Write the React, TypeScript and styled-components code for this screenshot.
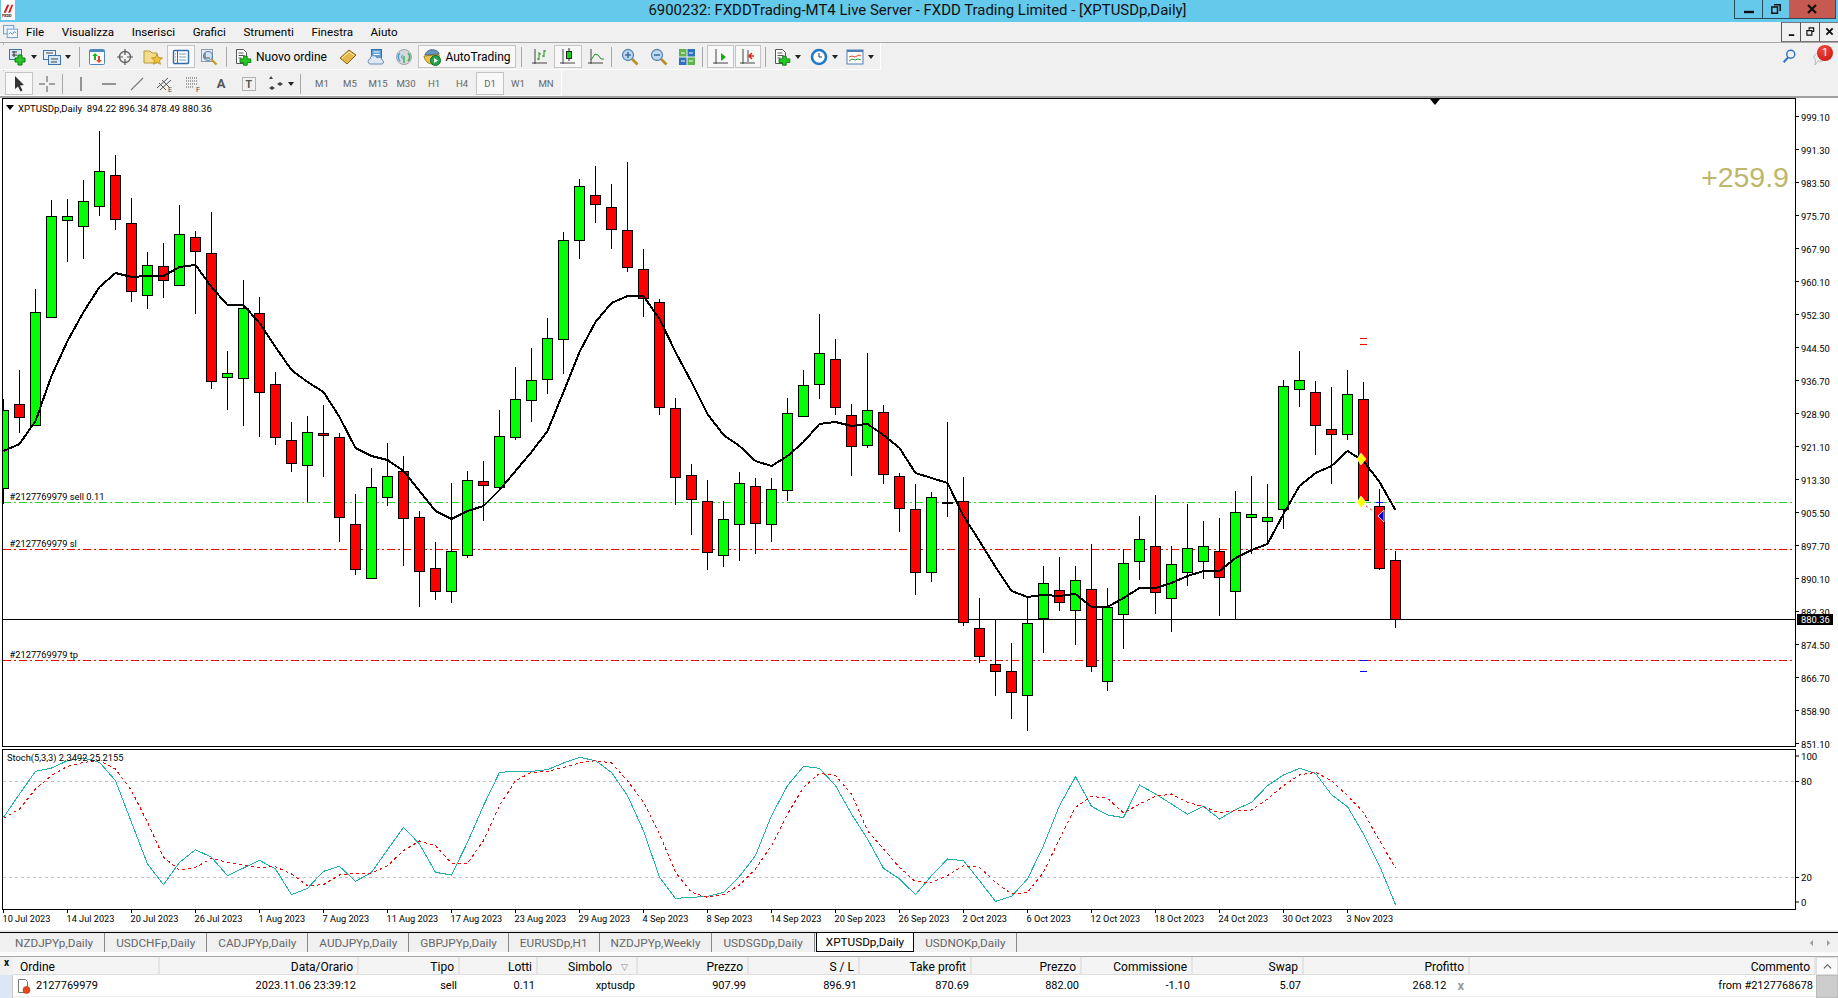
import React from "react";
import styled, { createGlobalStyle } from "styled-components";

// [high, body top, body bottom, low, up] in page pixels, one per bar, 16px apart
const BARS: [number, number, number, number, number][] = [
  [400, 411, 489, 505, 1], [371, 405, 418, 434, 0], [290, 313, 426, 426, 1], [201, 217, 318, 318, 1],
  [200, 217, 221, 263, 1], [181, 202, 227, 260, 1], [132, 172, 207, 217, 1], [156, 176, 220, 231, 0],
  [199, 224, 292, 303, 0], [253, 266, 296, 310, 1], [244, 267, 281, 299, 0], [206, 235, 286, 286, 1],
  [232, 238, 252, 315, 0], [213, 254, 382, 390, 0], [352, 374, 378, 411, 1], [281, 309, 379, 427, 1],
  [298, 314, 393, 438, 0], [373, 385, 438, 446, 0], [423, 441, 464, 473, 0], [417, 433, 466, 503, 1],
  [406, 434, 436, 478, 0], [434, 438, 518, 543, 0], [495, 525, 570, 576, 0], [469, 488, 579, 579, 1],
  [444, 477, 498, 507, 1], [457, 472, 519, 567, 0], [512, 518, 572, 608, 0], [543, 569, 592, 601, 0],
  [484, 552, 592, 604, 1], [472, 481, 556, 559, 1], [462, 482, 486, 522, 0], [411, 437, 488, 492, 1],
  [368, 400, 438, 441, 1], [349, 381, 401, 423, 1], [319, 339, 380, 395, 1], [233, 241, 340, 375, 1],
  [180, 187, 241, 260, 1], [167, 196, 205, 224, 0], [185, 208, 230, 250, 0], [163, 231, 268, 273, 0],
  [250, 270, 299, 318, 0], [300, 303, 408, 416, 0], [399, 409, 478, 506, 0], [465, 476, 500, 536, 0],
  [481, 502, 553, 571, 0], [502, 520, 556, 568, 1], [473, 484, 525, 562, 1], [479, 487, 524, 555, 0],
  [479, 490, 525, 543, 1], [399, 414, 491, 502, 1], [371, 386, 417, 417, 1], [315, 354, 385, 400, 1],
  [340, 360, 408, 416, 0], [405, 416, 447, 477, 0], [354, 411, 446, 449, 1], [406, 413, 475, 485, 0],
  [474, 477, 509, 533, 0], [485, 510, 573, 596, 0], [493, 498, 573, 583, 1], [423, 504, 504, 518, 0],
  [478, 502, 623, 627, 0], [599, 629, 657, 664, 0], [620, 665, 672, 697, 0], [644, 672, 693, 720, 0],
  [598, 624, 696, 732, 1], [567, 584, 619, 654, 1], [558, 591, 603, 612, 0], [567, 581, 611, 646, 1],
  [545, 590, 667, 673, 0], [589, 608, 682, 692, 1], [550, 564, 615, 650, 1], [517, 540, 562, 581, 1],
  [496, 547, 593, 615, 0], [547, 565, 599, 633, 1], [505, 549, 573, 587, 1], [522, 547, 562, 580, 1],
  [519, 552, 578, 617, 0], [492, 513, 592, 621, 1], [477, 515, 518, 555, 1], [485, 518, 522, 545, 1],
  [381, 387, 510, 530, 1], [352, 381, 390, 408, 1], [382, 393, 426, 456, 0], [388, 430, 435, 485, 0],
  [371, 395, 435, 441, 1], [383, 400, 501, 501, 0], [490, 507, 569, 571, 0], [552, 561, 620, 629, 0],
];

const MA = [
  452, 445, 422, 377, 342, 313, 288, 274, 278, 277, 277, 268, 266, 288, 306, 306, 324, 348, 371, 383,
  393, 418, 449, 457, 461, 472, 492, 512, 520, 512, 507, 491, 472, 453, 432, 393, 353, 323, 304, 297,
  297, 320, 353, 383, 415, 436, 447, 462, 467, 457, 443, 425, 423, 427, 425, 436, 449, 474, 479, 484,
  517, 542, 568, 592, 598, 596, 597, 595, 608, 608, 599, 589, 589, 584, 577, 572, 572, 559, 551, 545,
  515, 487, 474, 467, 452, 462, 483, 511,
];

// stochastic values, y = 740 + v / 3
const STOCH_MAIN = [
  235, 165, 97, 87, 65, 57, 70, 125, 250, 375, 437, 370, 332, 355, 410, 387, 364, 390, 467, 448,
  397, 382, 427, 400, 332, 265, 315, 400, 408, 310, 200, 100, 97, 97, 92, 72, 55, 65, 100, 170,
  275, 415, 478, 475, 472, 460, 412, 350, 230, 140, 82, 88, 140, 225, 300, 388, 420, 467, 410, 360,
  365, 425, 487, 472, 420, 320, 200, 113, 202, 228, 236, 138, 165, 195, 226, 202, 240, 212, 190, 140,
  108, 88, 103, 167, 203, 285, 380, 497,
];
const STOCH_SIGNAL = [
  238, 210, 150, 110, 82, 70, 65, 90, 155, 250, 355, 393, 385, 358, 370, 378, 385, 383, 405, 440,
  437, 408, 403, 403, 380, 335, 306, 320, 373, 373, 305, 200, 125, 100, 97, 85, 72, 65, 72, 125,
  190, 285, 400, 460, 475, 467, 438, 390, 320, 225, 145, 103, 110, 165, 275, 330, 385, 428, 430, 410,
  380, 385, 430, 465, 460, 400, 300, 205, 172, 178, 222, 195, 172, 165, 190, 203, 222, 215, 213, 180,
  140, 108, 100, 125, 170, 220, 305, 387,
];

const DATES = [
  "10 Jul 2023", "14 Jul 2023", "20 Jul 2023", "26 Jul 2023", "1 Aug 2023", "7 Aug 2023", "11 Aug 2023", "17 Aug 2023",
  "23 Aug 2023", "29 Aug 2023", "4 Sep 2023", "8 Sep 2023", "14 Sep 2023", "20 Sep 2023", "26 Sep 2023", "2 Oct 2023",
  "6 Oct 2023", "12 Oct 2023", "18 Oct 2023", "24 Oct 2023", "30 Oct 2023", "3 Nov 2023",
];

const TABS = [
  "NZDJPYp,Daily", "USDCHFp,Daily", "CADJPYp,Daily", "AUDJPYp,Daily", "GBPJPYp,Daily", "EURUSDp,H1",
  "NZDJPYp,Weekly", "USDSGDp,Daily", "XPTUSDp,Daily", "USDNOKp,Daily",
];

const COLS = ["Ordine", "Data/Orario", "Tipo", "Lotti", "Simbolo", "Prezzo", "S / L", "Take profit", "Prezzo", "Commissione", "Swap", "Profitto", "Commento"];
const ROW = ["2127769979", "2023.11.06 23:39:12", "sell", "0.11", "xptusdp", "907.99", "896.91", "870.69", "882.00", "-1.10", "5.07", "268.12", "from #2127768678"];

const MENU = ["File", "Visualizza", "Inserisci", "Grafici", "Strumenti", "Finestra", "Aiuto"];
const PERIODS = ["M1", "M5", "M15", "M30", "H1", "H4", "D1", "W1", "MN"];

const barX = (i: number) => 3.5 + 16 * i;
const px = (y: number) => Math.round(y) + 0.5;
const points = (vals: number[], f: (v: number) => number) => vals.map((v, i) => `${barX(i)},${f(v)}`).join(" ");
const priceLabel = (k: number) => (999.1 - 7.8 * k + (k >= 14 ? 0.2 : 0)).toFixed(2);

const GlobalStyle = createGlobalStyle`
  html, body { margin: 0; padding: 0; background: #f0f0f0; }
  body { font-family: Roboto, "Liberation Sans", sans-serif; color: #000; overflow: hidden; }
`;

const Page = styled.div`
  display: flex;
  flex-direction: column;
  width: 1838px;
  height: 998px;
  overflow: hidden;
`;

const TitleBar = styled.div`
  display: grid;
  grid-template-columns: 1fr auto 1fr;
  align-items: start;
  height: 22px;
  background: #65c9eb;
`;

const Title = styled.div`
  font-size: 14.95px;
  line-height: 21px;
  padding-right: 3px;
  color: #111;
`;

const WindowButtons = styled.div`
  display: flex;
  justify-self: end;
  margin-right: 2px;
  border: 1px solid #2b4a57;
  border-top: 0;
  height: 18px;
`;

const WinButton = styled.div<{ $w: number; $close?: boolean }>`
  display: flex;
  align-items: center;
  justify-content: center;
  width: ${(p) => p.$w}px;
  background: ${(p) => (p.$close ? "#c75a50" : "transparent")};
  border-left: ${(p) => (p.$close ? "0" : "1px solid #2b4a57")};
  &:first-child { border-left: 0; }
`;

const MenuBar = styled.div`
  display: flex;
  align-items: center;
  height: 20px;
  border-bottom: 1px solid #a8a8a8;
  background: #f0f0f0;
  padding-left: 3px;
`;

const MenuItems = styled.div`
  display: flex;
  flex: 1;
`;

const MenuItem = styled.span`
  font-size: 11.6px;
  padding: 0 8.8px;
  &:first-child { padding-left: 8px; }
`;

const MdiButtons = styled.div`
  display: flex;
  height: 19px;
  border-left: 1px solid #555;
  border-bottom: 1px solid #777;
`;

const MdiButton = styled.div`
  display: flex;
  align-items: center;
  justify-content: center;
  width: 18px;
  border-right: 1px solid #555;
  border-top: 1px solid #777;
  &:last-child { border-right: 0; }
`;

const ToolRow = styled.div<{ $h: number }>`
  display: flex;
  align-items: center;
  height: ${(p) => p.$h}px;
  background: #f0f0f0;
`;

const ToolBand = styled.div<{ $w: number; $pad: number }>`
  display: flex;
  align-items: center;
  width: ${(p) => p.$w}px;
  height: 100%;
  padding: 2px 0 0 ${(p) => p.$pad}px;
  box-sizing: border-box;
  border-right: 1px solid #fff;
  border-bottom: 1px solid #fff;
  background-image: linear-gradient(#b0b0b0 50%, transparent 50%);
  background-size: 1px 3px;
  background-repeat: no-repeat;
  background-position: 3px 0;
`;

const Tool = styled.div<{ $w?: number; $on?: boolean; $after?: number }>`
  display: flex;
  align-items: center;
  justify-content: center;
  flex: none;
  gap: 4px;
  box-sizing: border-box;
  width: ${(p) => p.$w ?? 28}px;
  height: 23px;
  margin-right: ${(p) => p.$after ?? 0}px;
  border: 1px solid ${(p) => (p.$on ? "#c4c4c4" : "transparent")};
  background: ${(p) => (p.$on ? "#f8f8f8" : "transparent")};
`;

const ToolText = styled.span`
  font-size: 12px;
  white-space: nowrap;
`;

const LetterTool = styled.span`
  color: #555;
  font-weight: 700;
  font-size: 13px;
`;

const Sep = styled.div<{ $l?: number; $r?: number }>`
  flex: none;
  width: 1px;
  height: 20px;
  margin: 0 ${(p) => p.$r ?? 3}px 0 ${(p) => p.$l ?? 3}px;
  background: #a8a8a8;
`;

const Caret = styled.i`
  flex: none;
  width: 0;
  height: 0;
  border: 3px solid transparent;
  border-top: 4px solid #222;
  border-bottom: 0;
`;

const Period = styled(Tool)`
  font-size: 9.6px;
  color: #666;
`;

const RightTools = styled.div`
  display: flex;
  align-items: center;
  gap: 14px;
  margin-left: auto;
  margin-right: 5px;
  position: relative;
`;

const Badge = styled.span`
  position: absolute;
  right: 0;
  top: 0;
  width: 16px;
  height: 16px;
  border-radius: 50%;
  background: radial-gradient(circle at 40% 30%, #f04a3a, #c40f0f);
  color: #fff;
  font-size: 11px;
  line-height: 16px;
  text-align: center;
`;

const Rule = styled.div`
  height: 2px;
  flex: none;
  background: #a0a0a0;
`;

const ChartSvg = styled.svg`
  display: block;
  flex: none;
  background: #fff;
  font-family: Roboto, "Liberation Sans", sans-serif;
  font-size: 9.6px;
  fill: #000;
`;

const Ico = styled.svg<{ $s?: number }>`
  display: block;
  flex: none;
  width: ${(p) => p.$s ?? 18}px;
  height: ${(p) => p.$s ?? 18}px;
`;

const LogoMark = styled(Ico)`
  width: 14px;
  margin-left: 1px;
  background: #fff;
`;

const OrderMark = styled(Ico)`
  margin: 0 4px 0 0;
`;

const TabBar = styled.div`
  display: flex;
  align-items: stretch;
  height: 20px;
  box-sizing: border-box;
  border-top: 1px solid #000;
  background: #f0f0f0;
  padding-left: 4px;
`;

const Tab = styled.div<{ $on?: boolean }>`
  display: flex;
  align-items: center;
  box-sizing: border-box;
  font-size: 11.75px;
  white-space: nowrap;
  padding: 0 ${(p) => (p.$on ? "9px" : "11px")};
  margin-left: ${(p) => (p.$on ? "1px" : "0")};
  color: ${(p) => (p.$on ? "#000" : "#666")};
  background: ${(p) => (p.$on ? "#fff" : "transparent")};
  border-right: 1px solid ${(p) => (p.$on ? "#000" : "#888")};
  border-left: ${(p) => (p.$on ? "1px solid #000" : "0")};
  border-bottom: ${(p) => (p.$on ? "1px solid #000" : "0")};
`;

const TabArrows = styled.div`
  display: flex;
  align-items: center;
  gap: 14px;
  margin-left: auto;
  padding-right: 8px;
`;

const TabArrow = styled.i<{ $left?: boolean }>`
  width: 0;
  height: 0;
  border: 3px solid transparent;
  ${(p) => (p.$left ? "border-right: 3px solid #999; border-left: 0;" : "border-left: 3px solid #999; border-right: 0;")}
`;

const Gutter = styled.div`
  height: 4px;
  flex: none;
  background: #fbfbfb;
`;

const Terminal = styled.div`
  display: flex;
  height: 41px;
  flex: none;
  border-top: 1px solid #a8a8a8;
  background: #fff;
`;

const SideStrip = styled.div`
  display: flex;
  flex-direction: column;
  width: 13px;
  flex: none;
`;

const CloseMark = styled.div`
  height: 18px;
  font-size: 10px;
  font-weight: 700;
  line-height: 12px;
  text-align: center;
  background: #f0f0f0;
`;

const SidePanel = styled.div`
  flex: 1;
  background: #dbe7f4;
  border-right: 1px solid #c8c8c8;
`;

const Table = styled.div`
  display: grid;
  flex: 1;
  grid-template-columns: 147px 199px 101px 78px 100px 111px 111px 112px 110px 111px 111px 166px 346px;
  grid-template-rows: 18px 22px;
`;

const HeadCell = styled.div<{ $left?: boolean }>`
  display: flex;
  align-items: center;
  justify-content: ${(p) => (p.$left ? "flex-start" : "flex-end")};
  gap: 9px;
  box-sizing: border-box;
  padding: 2px 4px 0 ${(p) => (p.$left ? "7px" : "4px")};
  font-size: 12px;
  background: #f4f4f4;
  border-right: 2px solid #e4e4e4;
  border-bottom: 1px solid #dcdcdc;
  white-space: nowrap;
`;

const Cell = styled.div<{ $left?: boolean }>`
  display: flex;
  align-items: center;
  justify-content: ${(p) => (p.$left ? "flex-start" : "flex-end")};
  box-sizing: border-box;
  padding: 0 3px;
  font-size: 11px;
  border-bottom: 1px solid #eee;
  white-space: nowrap;
`;

const RemoveMark = styled.span`
  margin: 0 3px 0 11px;
  color: #999;
  font-weight: 700;
  font-size: 13px;
`;

const SortMark = styled.span`
  margin-right: 4px;
  color: #888;
  font-size: 9px;
`;

const ScrollBar = styled.div`
  display: flex;
  flex-direction: column;
  flex: none;
  width: 22px;
  background: #f0f0f0;
`;

const ScrollUp = styled.div`
  display: flex;
  align-items: center;
  justify-content: center;
  height: 18px;
  box-sizing: border-box;
  border: 1px solid #ddd;
  background: #fafafa;
`;

const ScrollThumb = styled.div`
  flex: 1;
  background: #cdcdcd;
  border: 1px solid #bbb;
`;

const NewChartIcon = () => (
  <Ico viewBox="0 0 18 18">
    <rect x=".5" y="1.5" width="12" height="10" fill="#d8e8f8" stroke="#3d74ad" />
    <path d="M3 4h5M3 7h5M5 3v6" stroke="#333" fill="none" />
    <path d="M9 7h4v3h3v4h-3v3H9v-3H6v-4h3z" fill="#26c926" stroke="#0a7a0a" />
  </Ico>
);
const ProfilesIcon = () => (
  <Ico viewBox="0 0 18 18">
    <rect x=".5" y="2.5" width="12" height="9" fill="#e6effa" stroke="#3d74ad" />
    <rect x="5.5" y="7.5" width="12" height="9" fill="#d8e8f8" stroke="#3d74ad" />
    <path d="M3 5h7M8 11h7M8 14h6" stroke="#444" />
  </Ico>
);
const MarketIcon = () => (
  <Ico viewBox="0 0 18 18">
    <rect x="1.5" y="1.5" width="15" height="15" rx="1" fill="#fff" stroke="#4f88c0" />
    <path d="M2 2h14v2H2z" fill="#4f88c0" />
    <path d="M6 12V8H4l3-3 3 3H8v4z" fill="#1fb51f" />
    <path d="M10 8v4H8l3 3 3-3h-2V8z" fill="#e0452a" />
  </Ico>
);
const NavigatorIcon = () => (
  <Ico viewBox="0 0 18 18">
    <circle cx="9" cy="9" r="5.5" fill="none" stroke="#666" strokeWidth="1.4" />
    <path d="M9 1v6M9 11v6M1 9h6M11 9h6" stroke="#555" strokeWidth="1.2" />
  </Ico>
);
const FolderStarIcon = () => (
  <Ico viewBox="0 0 20 18" $s={20}>
    <path d="M1 3h6l2 2h5v10H1z" fill="#f5dc8c" stroke="#b8963c" />
    <path d="M14 6l1.6 3.6 3.9.4-3 2.5 1 3.8-3.5-2-3.5 2 1-3.8-3-2.5 3.9-.4z" fill="#f2c230" stroke="#a8821c" strokeWidth=".7" />
  </Ico>
);
const TerminalIcon = () => (
  <Ico viewBox="0 0 18 18">
    <rect x="1.5" y="2.5" width="15" height="13" rx="1" fill="#fff" stroke="#2d6cb0" strokeWidth="1.4" />
    <path d="M5.5 3v12" stroke="#2d6cb0" />
    <path d="M7 6h7M7 9h7M7 12h7" stroke="#7a9cc0" />
    <path d="M3 6h1M3 9h1M3 12h1" stroke="#d9534f" />
  </Ico>
);
const TesterIcon = () => (
  <Ico viewBox="0 0 18 18">
    <rect x="1.5" y="1.5" width="11" height="12" fill="#e8eef6" stroke="#8a9bb0" />
    <circle cx="8" cy="8" r="4.5" fill="#cfe3f7" stroke="#5f7f9f" strokeWidth="1.2" />
    <path d="M5 5v5h5" stroke="#555" fill="none" />
    <path d="M11.5 11.5l5 5" stroke="#c59a2c" strokeWidth="2.2" />
  </Ico>
);
const NewOrderIcon = () => (
  <Ico viewBox="0 0 18 18">
    <path d="M2.5 1.5h7l3 3v11h-10z" fill="#fff" stroke="#555" />
    <path d="M4.5 5h5M4.5 7.5h6M4.5 10h3" stroke="#555" />
    <path d="M9 8h4v3h4v4h-4v3H9v-3H5v-4h4z" fill="#26c926" stroke="#0a7a0a" transform="translate(1.5 1) scale(.9)" />
  </Ico>
);
const BookIcon = () => (
  <Ico viewBox="0 0 18 18">
    <path d="M1 10l9-8 7 5-9 9z" fill="#e6b84a" stroke="#8a6516" />
    <path d="M3 10l7-6 5 3.5" fill="none" stroke="#fff3c8" />
  </Ico>
);
const CloudDocIcon = () => (
  <Ico viewBox="0 0 18 18">
    <rect x="4.5" y="1.5" width="10" height="9" fill="#5c9ede" stroke="#2d6cb0" />
    <path d="M6.5 4h6M6.5 6.5h6" stroke="#fff" />
    <path d="M3 16a2.6 2.6 0 0 1 0-5 3.6 3.6 0 0 1 7-1 3 3 0 0 1 5 2 2.1 2.1 0 0 1 0 4z" fill="#dce9f6" stroke="#6c8cac" />
  </Ico>
);
const SignalIcon = () => (
  <Ico viewBox="0 0 18 18">
    <circle cx="9" cy="9" r="7.5" fill="#d4d8dc" stroke="#9aa4ae" />
    <path d="M5 13a5.5 5.5 0 0 1 0-8" fill="none" stroke="#3aa0c8" strokeWidth="1.4" />
    <path d="M13 13a5.5 5.5 0 0 0 0-8" fill="none" stroke="#3fae4a" strokeWidth="1.6" />
    <path d="M7.5 11a3 3 0 0 1 0-4" fill="none" stroke="#3aa0c8" />
    <path d="M9 8v7" stroke="#3fae4a" strokeWidth="1.4" />
  </Ico>
);
const AutoTradingIcon = () => (
  <Ico viewBox="0 0 18 18">
    <path d="M2 7c1-4 5-6 9-5 3 .6 5 2 5 4l-14 1z" fill="#6a96c4" stroke="#3f6a96" />
    <path d="M1 8l15-1.5c1 5-2 9-6.500 9.500C5 16 2 13 1 8z" fill="#e9c34c" stroke="#9c7a1c" />
    <circle cx="12.500" cy="12.500" r="5" fill="#25a34a" stroke="#0f6e2e" />
    <path d="M11 10l4 2.500-4 2.500z" fill="#fff" />
  </Ico>
);
const AxesIcon = ({ children }: { children: React.ReactNode }) => (
  <Ico viewBox="0 0 18 18">
    <path d="M4 1v15M1 15h15" stroke="#444" fill="none" />
    {children}
  </Ico>
);
const ZoomIcon = ({ plus }: { plus?: boolean }) => (
  <Ico viewBox="0 0 18 18">
    <path d="M10.500 10.500l6 6" stroke="#b98f28" strokeWidth="2.600" />
    <circle cx="7" cy="7" r="5.500" fill="#bcd8f2" stroke="#5d86ad" strokeWidth="1.300" />
    <path d={plus ? "M4 7h6M7 4v6" : "M4 7h6"} stroke="#3f6f9f" strokeWidth="1.600" />
  </Ico>
);
const TileIcon = () => (
  <Ico viewBox="0 0 18 18">
    <rect x="1" y="1" width="7.500" height="7.500" fill="#5fb548" />
    <rect x="9.500" y="1" width="7.500" height="7.500" fill="#2f6fc4" />
    <rect x="1" y="9.500" width="7.500" height="7.500" fill="#2f6fc4" />
    <rect x="9.500" y="9.500" width="7.500" height="7.500" fill="#5fb548" />
    <path d="M3 5h4M11 5h4M3 13h4M11 13h4" stroke="#fff" />
  </Ico>
);
const ClockIcon = () => (
  <Ico viewBox="0 0 18 18">
    <circle cx="9" cy="9" r="7" fill="#fff" stroke="#1f78c8" strokeWidth="2.600" />
    <path d="M9 5v4h3" fill="none" stroke="#333" />
  </Ico>
);
const TemplateIcon = () => (
  <Ico viewBox="0 0 18 18">
    <rect x="1" y="2" width="16" height="14" fill="#fff" stroke="#4f7fae" />
    <path d="M1 2h16v2H1z" fill="#4f7fae" />
    <path d="M3 9l3-1 3 1 4-2 2 1" fill="none" stroke="#d9472b" />
    <path d="M3 13l3-2 3 1 3-1 3 1" fill="none" stroke="#2aa02a" />
  </Ico>
);
const BarsIcon = () => (
  <AxesIcon>
    <path d="M8 4v8M6 11h2M8 6h2M13 2v7M11 8h2M13 3h2" stroke="#1f8f1f" fill="none" />
  </AxesIcon>
);
const CandlesIcon = () => (
  <AxesIcon>
    <path d="M10 0v13" stroke="#222" />
    <rect x="7.500" y="3.500" width="5" height="7" fill="#18d018" stroke="#222" />
  </AxesIcon>
);
const LineIcon = () => (
  <AxesIcon>
    <path d="M4 12l4-6 3 1 3 4h3" stroke="#1f8f1f" fill="none" />
  </AxesIcon>
);

const LEVELS = [
  { y: 503.5, color: "#32cd32" },
  { y: 550.5, color: "#ff0000" },
  { y: 661.5, color: "#ff0000" },
];

const PriceChart = () => (
  <ChartSvg width="1838" height="651" viewBox="0 99 1838 651">
    <defs>
      <clipPath id="plot">
        <rect x="3" y="100" width="1792" height="647" />
      </clipPath>
    </defs>
    <g clipPath="url(#plot)" shapeRendering="crispEdges">
      {LEVELS.map((l) => (
        <line key={l.y} x1="3" x2="1795" y1={l.y} y2={l.y} stroke={l.color} strokeDasharray="8 3 2 3" />
      ))}
      <line x1="3" x2="1795" y1="620.5" y2="620.5" stroke="#000" />
      {BARS.map(([high, top, bottom, low, up], i) => (
        <g key={i}>
          <line x1={barX(i)} x2={barX(i)} y1={high} y2={low} stroke="#000" />
          {top === bottom ? (
            <rect x={barX(i) - 5.5} y={top - 1} width="11" height="2" fill="#000" />
          ) : (
            <rect x={barX(i) - 5} y={px(top)} width="10" height={Math.round(bottom) - Math.round(top)} fill={up ? "#00ff00" : "#ff0000"} stroke="#000" />
          )}
        </g>
      ))}
      <path d="M1360 339.500h7M1360 345.500h7" stroke="#ff0000" />
      <path d="M1360 661.500h7" stroke="#0000ff" />
      <path d="M1360 672.500h7M1376 503.500h7" stroke="#0000ff" />
      <polyline points={points(MA, (v) => v)} fill="none" stroke="#000" strokeWidth="2" />
    </g>
    <g clipPath="url(#plot)">
      <line x1="1362" y1="504" x2="1373" y2="512" stroke="#ff0000" strokeDasharray="2 3" />
      <path d="M1361 454l5 6-5 6-4-6zM1361 497l5 6-5 6-4-6z" fill="#ffff00" stroke="#fff" strokeWidth=".6" />
      <path d="M1384 511v12l-6-6z" fill="#0000dd" stroke="#fff" strokeWidth=".8" />
      <path d="M1430 100h10l-5 6z" fill="#000" />
      <path d="M6 106h8l-4 5z" fill="#000" />
    </g>
    <text x="18" y="113">XPTUSDp,Daily&#160; 894.22 896.34 878.49 880.36</text>
    <g fontSize="9.300">
      <text x="9.500" y="501">#2127769979 sell 0.11</text>
      <text x="9.500" y="548">#2127769979 sl</text>
      <text x="9.500" y="659">#2127769979 tp</text>
    </g>
    <text x="1701" y="188" fontFamily="'Liberation Sans', sans-serif" fontSize="28.500" fill="#bdb76b">+259.9</text>
    {Array.from({ length: 20 }, (_, k) => (
      <g key={k}>
        <line x1="1795" x2="1799" y1={117.5 + 33 * k} y2={117.5 + 33 * k} stroke="#000" />
        <text x="1801" y={121.5 + 33 * k} fontSize="9.400">{priceLabel(k)}</text>
      </g>
    ))}
    <rect x="1797" y="615" width="36" height="11" fill="#000" />
    <text x="1801" y="624" fontSize="9.400" style={{ fill: "#fff" }}>880.36</text>
    <path d="M2.500 100v647.500M1795.500 100v647.500" stroke="#000" shapeRendering="crispEdges" />
    <path d="M2 99.700h1794M2 747.500h1794" stroke="#000" strokeWidth="1.300" shapeRendering="crispEdges" />
  </ChartSvg>
);

const StochChart = () => (
  <ChartSvg width="1838" height="183" viewBox="0 750 1838 183">
    <defs>
      <clipPath id="stoch">
        <rect x="3" y="750" width="1792" height="160" />
      </clipPath>
    </defs>
    <g clipPath="url(#stoch)" shapeRendering="crispEdges">
      <line x1="3" x2="1795" y1="782.500" y2="782.500" stroke="#c0c0c0" strokeDasharray="3 3" />
      <line x1="3" x2="1795" y1="878.500" y2="878.500" stroke="#c0c0c0" strokeDasharray="3 3" />
      <polyline points={points(STOCH_MAIN, (v) => 740 + v / 3)} fill="none" stroke="#20b2aa" />
      <polyline points={points(STOCH_SIGNAL, (v) => 740 + v / 3)} fill="none" stroke="#ff0000" strokeDasharray="3 3" />
    </g>
    <text x="7" y="762" fontSize="9.300">Stoch(5,3,3) 2.3492 25.2155</text>
    {[
      ["100", 757],
      ["80", 782.5],
      ["20", 878.5],
      ["0", 903],
    ].map(([label, y]) => (
      <g key={label}>
        <line x1="1795" x2="1799" y1={y} y2={y} stroke="#000" />
        <text x="1801" y={Number(y) + 3.5}>{label}</text>
      </g>
    ))}
    {DATES.map((d, i) => (
      <g key={d}>
        <line x1={3.5 + 64 * i} x2={3.5 + 64 * i} y1="910" y2="914" stroke="#000" />
        <text x={2.5 + 64 * i} y="923" fontSize="9.200">{d}</text>
      </g>
    ))}
    <path d="M2.500 750v160.500M1795.500 750v160.500" stroke="#000" shapeRendering="crispEdges" />
    <path d="M2 750h1794M2 910.500h1794" stroke="#000" strokeWidth="1.300" shapeRendering="crispEdges" />
    <line x1="0" x2="1838" y1="932" y2="932" stroke="#d8d8d8" />
  </ChartSvg>
);

const Toolbar1 = () => (
  <ToolRow $h={28}>
    <ToolBand $w={881} $pad={6}>
      <Tool $w={34}><NewChartIcon /><Caret /></Tool>
      <Tool $w={34}><ProfilesIcon /><Caret /></Tool>
      <Sep $l={5} $r={3} />
      <Tool><MarketIcon /></Tool>
      <Tool><NavigatorIcon /></Tool>
      <Tool><FolderStarIcon /></Tool>
      <Tool $on><TerminalIcon /></Tool>
      <Tool><TesterIcon /></Tool>
      <Sep $l={3} $r={0} />
      <Tool $w={107}><NewOrderIcon /><ToolText>Nuovo ordine</ToolText></Tool>
      <Tool><BookIcon /></Tool>
      <Tool><CloudDocIcon /></Tool>
      <Tool><SignalIcon /></Tool>
      <Tool $w={98} $on><AutoTradingIcon /><ToolText>AutoTrading</ToolText></Tool>
      <Sep $l={5} $r={4} />
      <Tool><BarsIcon /></Tool>
      <Tool $on><CandlesIcon /></Tool>
      <Tool><LineIcon /></Tool>
      <Sep $l={1} $r={3} />
      <Tool $w={29}><ZoomIcon plus /></Tool>
      <Tool $w={29}><ZoomIcon /></Tool>
      <Tool><TileIcon /></Tool>
      <Sep $l={1} $r={4} />
      <Tool $w={27} $on $after={1}><AxesIcon><path d="M9 5l5 4-5 4z" fill="#18a818" /></AxesIcon></Tool>
      <Tool $w={26} $on><AxesIcon><path d="M9 2v12" stroke="#444" /><path d="M15 8l-5 0M13 5l-3 3 3 3" stroke="#d8281c" fill="none" strokeWidth="1.500" /></AxesIcon></Tool>
      <Sep $l={4} $r={3} />
      <Tool $w={36}><NewOrderIcon /><Caret /></Tool>
      <Tool $w={37}><ClockIcon /><Caret /></Tool>
      <Tool $w={36}><TemplateIcon /><Caret /></Tool>
    </ToolBand>
    <RightTools>
      <Ico viewBox="0 0 18 18" $s={16}>
        <circle cx="11" cy="7" r="4.500" fill="none" stroke="#2f6fc8" strokeWidth="1.600" />
        <path d="M8 10.500l-5 5.500" stroke="#2f6fc8" strokeWidth="2.200" />
      </Ico>
      <Ico viewBox="0 0 22 22" $s={22}>
        <path d="M3 9a7 5.500 0 0 1 13 0 7 5.500 0 0 1-9 5l-3 4 .5-5A5 5 0 0 1 3 9z" transform="translate(0 2)" fill="#f0f0f0" stroke="#bbb" />
      </Ico>
      <Badge>1</Badge>
    </RightTools>
  </ToolRow>
);

const Toolbar2 = () => (
  <ToolRow $h={26}>
    <ToolBand $w={562} $pad={5}>
      <Tool $on><Ico viewBox="0 0 18 18"><path d="M5 1l9 9-4 .5 2.500 5-2 1-2.500-5L5 14z" fill="#333" /></Ico></Tool>
      <Tool><Ico viewBox="0 0 18 18"><path d="M9 1v6M9 11v6M1 9h6M11 9h6" stroke="#555" fill="none" /></Ico></Tool>
      <Sep $l={1} $r={3} />
      <Tool $w={29}><Ico viewBox="0 0 18 18"><path d="M9 2v14" stroke="#555" strokeWidth="1.200" /></Ico></Tool>
      <Tool><Ico viewBox="0 0 18 18"><path d="M2 9h14" stroke="#555" strokeWidth="1.200" /></Ico></Tool>
      <Tool><Ico viewBox="0 0 18 18"><path d="M3 15L15 3" stroke="#777" strokeWidth="1.100" /></Ico></Tool>
      <Tool><Ico viewBox="0 0 18 18"><path d="M1 13L12 3M4 15L15 5M3 8l7 7M6 5l7 7" stroke="#555" fill="none" /><text x="12" y="17" fontSize="7" fill="#444">E</text></Ico></Tool>
      <Tool><Ico viewBox="0 0 18 18"><path d="M2 3h12M2 6h12M2 9h12M2 12h8" stroke="#555" strokeDasharray="1 1" fill="none" /><text x="12" y="17" fontSize="7" fill="#444">F</text></Ico></Tool>
      <Tool><LetterTool>A</LetterTool></Tool>
      <Tool><Ico viewBox="0 0 18 18"><rect x="2.500" y="2.500" width="13" height="13" fill="none" stroke="#777" strokeDasharray="1 1" /><text x="5.500" y="13" fontSize="10.500" fontWeight="700" fill="#555">T</text></Ico></Tool>
      <Tool $w={34}><Ico viewBox="0 0 18 18"><path d="M3 4l4 0-2-3zM11 9l3-2 3 2-3 2zM6 11l-3 2 3 2 3-2z" fill="#444" /></Ico><Caret /></Tool>
      <Sep $l={3} $r={7} />
      {PERIODS.map((p) => (
        <Period key={p} $on={p === "D1"}>{p}</Period>
      ))}
    </ToolBand>
  </ToolRow>
);

const OrderIcon = () => (
  <OrderMark viewBox="0 0 16 16" $s={16}>
    <path d="M2.500 1.500h7l2 2v11h-9z" fill="#fff" stroke="#777" />
    <circle cx="10.500" cy="12" r="3.500" fill="#e8491d" stroke="#a83008" strokeWidth=".6" />
  </OrderMark>
);

export default function App() {
  return (
    <Page>
      <GlobalStyle />
      <TitleBar>
        <LogoMark viewBox="0 0 16 20" $s={20}>
          <path d="M3 13L7 4h2.500l-4 9zM8 13l4-9h2l-3.500 9z" fill="#d21f1f" />
          <text x="1" y="18.500" fontSize="4.500" fontWeight="700" fill="#222">FXDD</text>
        </LogoMark>
        <Title>6900232: FXDDTrading-MT4 Live Server - FXDD Trading Limited - [XPTUSDp,Daily]</Title>
        <WindowButtons>
          <WinButton $w={27}><Ico viewBox="0 0 10 10" $s={10}><path d="M0 8h10" stroke="#111" strokeWidth="2.400" /></Ico></WinButton>
          <WinButton $w={26}><Ico viewBox="0 0 10 10" $s={10}><path d="M3 .8h6.200V7M.8 3h5.700v6.200H.8z" fill="none" stroke="#111" strokeWidth="1.500" /></Ico></WinButton>
          <WinButton $w={46} $close><Ico viewBox="0 0 10 10" $s={10}><path d="M1 1l8 8M9 1l-8 8" stroke="#111" strokeWidth="2.200" /></Ico></WinButton>
        </WindowButtons>
      </TitleBar>
      <MenuBar>
        <Ico viewBox="0 0 16 16" $s={15}>
          <rect x=".5" y="1.500" width="11" height="9" fill="#e6effa" stroke="#6a9ccc" />
          <rect x="4.500" y="5.500" width="11" height="9" fill="#f4f8fc" stroke="#6a9ccc" />
          <path d="M6 11l2-2 2 2 2-3 2 2" fill="none" stroke="#4f88c0" />
        </Ico>
        <MenuItems>
          {MENU.map((m) => (
            <MenuItem key={m}>{m}</MenuItem>
          ))}
        </MenuItems>
        <MdiButtons>
          <MdiButton><Ico viewBox="0 0 10 10" $s={9}><path d="M2 9h6" stroke="#111" strokeWidth="2" /></Ico></MdiButton>
          <MdiButton><Ico viewBox="0 0 10 10" $s={9}><path d="M3.500 3V1h5v4H6.500M1 4h5.500v5H1z" fill="none" stroke="#111" strokeWidth="1.300" /></Ico></MdiButton>
          <MdiButton><Ico viewBox="0 0 10 10" $s={9}><path d="M1.500 1.500l7 7M8.500 1.500l-7 7" stroke="#111" strokeWidth="2" /></Ico></MdiButton>
        </MdiButtons>
      </MenuBar>
      <Toolbar1 />
      <Toolbar2 />
      <Rule />
      <PriceChart />
      <StochChart />
      <TabBar>
        {TABS.map((t) => (
          <Tab key={t} $on={t.startsWith("XPTUSDp")}>{t}</Tab>
        ))}
        <TabArrows>
          <TabArrow $left />
          <TabArrow />
        </TabArrows>
      </TabBar>
      <Gutter />
      <Terminal>
        <SideStrip>
          <CloseMark>x</CloseMark>
          <SidePanel />
        </SideStrip>
        <Table>
          {COLS.map((c, i) => (
            <HeadCell key={i} $left={i === 0}>
              {c}
              {c === "Simbolo" && <SortMark>▽</SortMark>}
            </HeadCell>
          ))}
          {ROW.map((v, i) => (
            <Cell key={i} $left={i === 0}>
              {i === 0 && <OrderIcon />}
              {v}
              {v === "268.12" && <RemoveMark>x</RemoveMark>}
            </Cell>
          ))}
        </Table>
        <ScrollBar>
          <ScrollUp>
            <Ico viewBox="0 0 10 10" $s={9}><path d="M1 7l4-4 4 4" fill="none" stroke="#555" strokeWidth="1.200" /></Ico>
          </ScrollUp>
          <ScrollThumb />
        </ScrollBar>
      </Terminal>
    </Page>
  );
}
